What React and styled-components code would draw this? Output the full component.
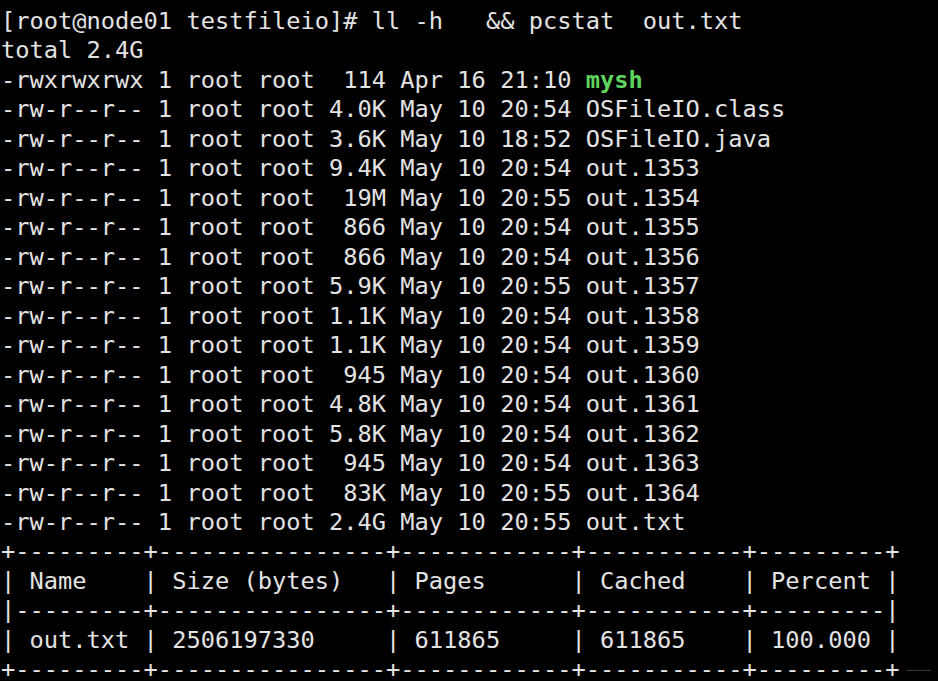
import React from 'react';
import styled, { createGlobalStyle } from 'styled-components';

const GlobalStyle = createGlobalStyle`
  html, body {
    margin: 0;
    padding: 0;
    background: #000;
  }
`;

const listing = [
  ['-rwxrwxrwx', '114', 'Apr 16 21:10', 'mysh', true],
  ['-rw-r--r--', '4.0K', 'May 10 20:54', 'OSFileIO.class'],
  ['-rw-r--r--', '3.6K', 'May 10 18:52', 'OSFileIO.java'],
  ['-rw-r--r--', '9.4K', 'May 10 20:54', 'out.1353'],
  ['-rw-r--r--', '19M', 'May 10 20:55', 'out.1354'],
  ['-rw-r--r--', '866', 'May 10 20:54', 'out.1355'],
  ['-rw-r--r--', '866', 'May 10 20:54', 'out.1356'],
  ['-rw-r--r--', '5.9K', 'May 10 20:55', 'out.1357'],
  ['-rw-r--r--', '1.1K', 'May 10 20:54', 'out.1358'],
  ['-rw-r--r--', '1.1K', 'May 10 20:54', 'out.1359'],
  ['-rw-r--r--', '945', 'May 10 20:54', 'out.1360'],
  ['-rw-r--r--', '4.8K', 'May 10 20:54', 'out.1361'],
  ['-rw-r--r--', '5.8K', 'May 10 20:54', 'out.1362'],
  ['-rw-r--r--', '945', 'May 10 20:54', 'out.1363'],
  ['-rw-r--r--', '83K', 'May 10 20:55', 'out.1364'],
  ['-rw-r--r--', '2.4G', 'May 10 20:55', 'out.txt'],
];

const border = '+---------+----------------+------------+-----------+---------+';

const table = [
  border,
  '| Name    | Size (bytes)   | Pages      | Cached    | Percent |',
  '|---------+----------------+------------+-----------+---------|',
  '| out.txt | 2506197330     | 611865     | 611865    | 100.000 |',
];

const App = () => {
  return (
    <>
      <GlobalStyle />
      <Screen>
        <Line>[root@node01 testfileio]# ll -h   &amp;&amp; pcstat  out.txt</Line>
        <Line>total 2.4G</Line>
        {listing.map(([perm, size, date, name, exec]) => (
          <Line key={name}>
            {`${perm} 1 root root ${size.padStart(4, ' ')} ${date} `}
            {exec ? <Exec>{name}</Exec> : name}
          </Line>
        ))}
        {table.map((row, i) => (
          <Line key={i}>{row}</Line>
        ))}
        <Line>
          {border}
          <Trail />
        </Line>
      </Screen>
    </>
  );
};

export default App;

const Screen = styled.div`
  width: 938px;
  height: 681px;
  overflow: hidden;
  box-sizing: border-box;
  padding: 7px 0 0 1px;
  background: #000;
  color: #e3e3e3;
  font-family: 'DejaVu Sans Mono', 'Liberation Mono', monospace;
  font-size: 23.7px;
  line-height: 29.47px;
`;

const Line = styled.div`
  white-space: pre;
  height: 29.47px;
  display: flex;
  align-items: center;
`;

const Exec = styled.span`
  color: #5ed35e;
  font-weight: bold;
`;

const Trail = styled.span`
  display: inline-block;
  width: 24px;
  height: 1px;
  margin-left: 8px;
  background: #3a3a3a;
`;
